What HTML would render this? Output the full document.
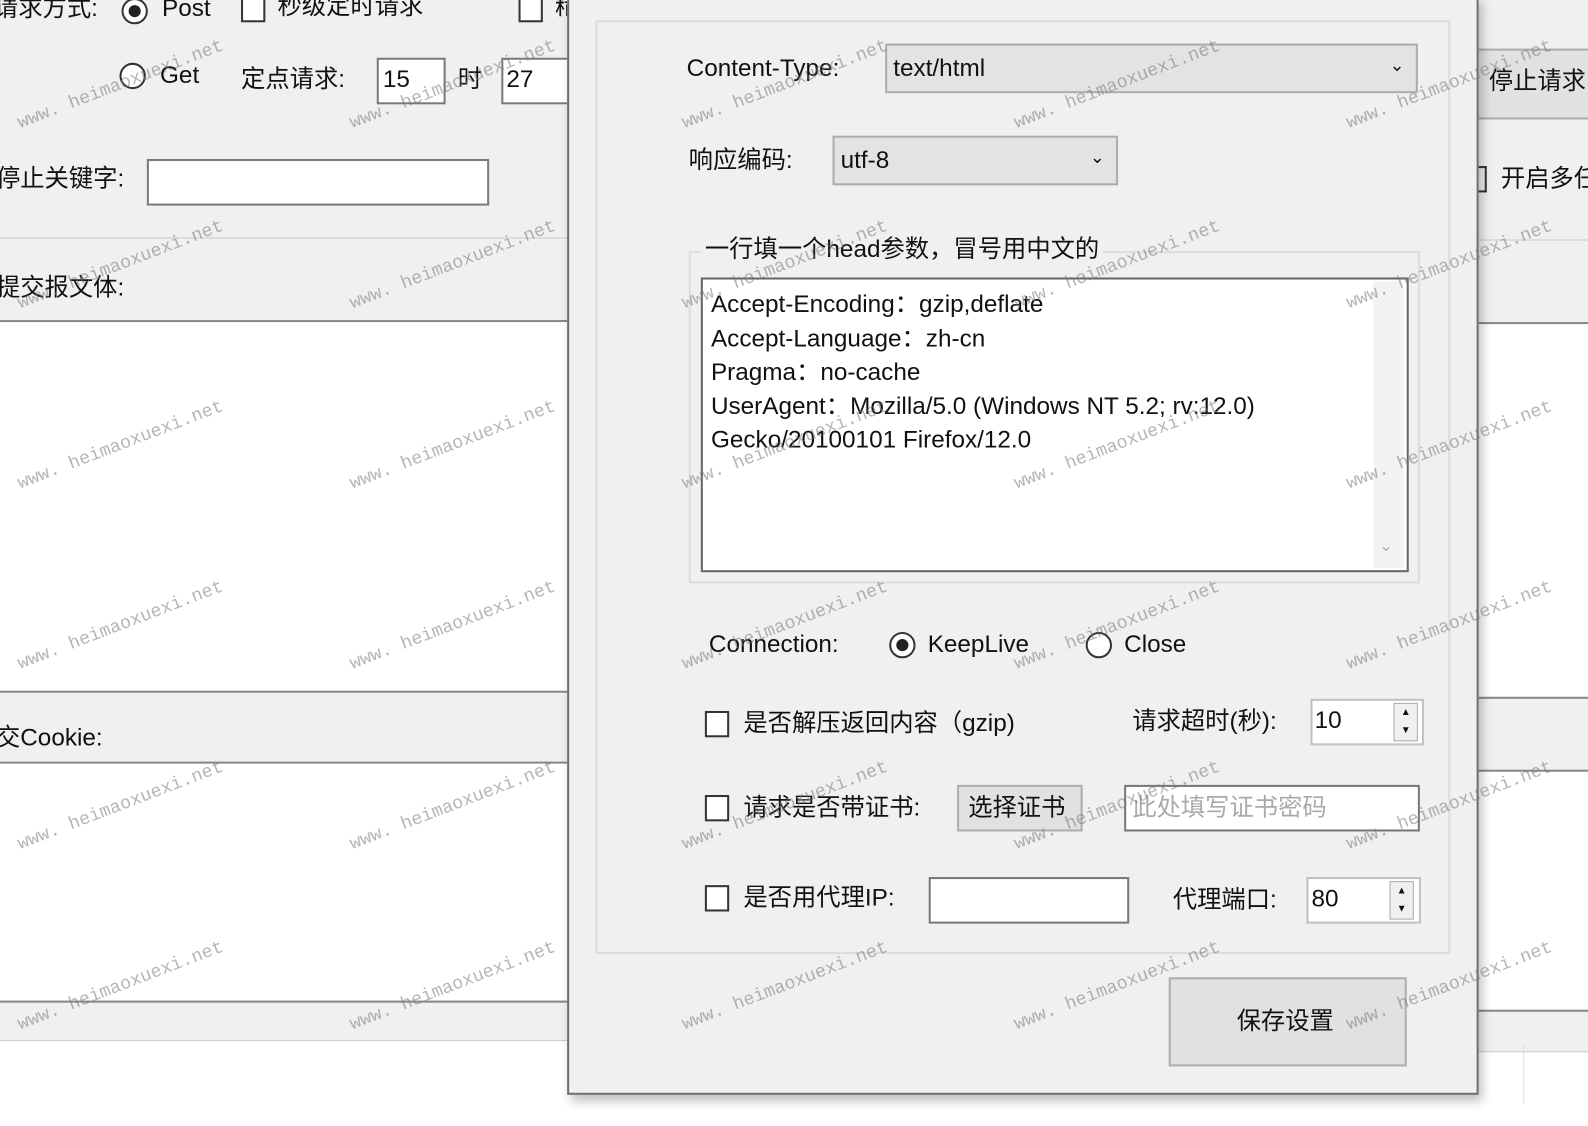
<!DOCTYPE html>
<html><head><meta charset="utf-8"><style>
*{margin:0;padding:0;box-sizing:border-box}
body{width:1588px;height:1126px;position:relative;overflow:hidden;background:#fff;font-family:"Liberation Sans","Noto Sans CJK SC",sans-serif;font-size:24px;color:#111}
#w{position:absolute;left:0;top:0;width:1568px;height:1112px;transform:scale(1.01276);transform-origin:0 0}
.a{position:absolute}
.t{position:absolute;white-space:nowrap;line-height:1}
.box{position:absolute;background:#fff;border:2px solid #7a7a7a}
.cb{position:absolute;width:24px;height:26px;border:2px solid #333;background:#fff}
.rad{position:absolute;width:26px;height:26px;border:2px solid #333;border-radius:50%;background:#fff}
.rad.on::after{content:"";position:absolute;left:5px;top:5px;width:12px;height:12px;border-radius:50%;background:#222}
.combo{position:absolute;background:#e3e3e3;border:2px solid #adadad}
.wm{position:absolute;font-family:"Liberation Mono",monospace;font-size:18px;color:rgba(120,120,120,.55);transform:rotate(-21deg);transform-origin:left bottom;white-space:nowrap;letter-spacing:0}
</style></head><body><div id="w">
<div class="a" style="left:0;top:0;width:562px;height:318px;background:#f0f0f0"></div>
<div class="a" style="left:0;top:234px;width:562px;height:2px;background:#ddd"></div>
<div class="a" style="left:0;top:316px;width:562px;height:2px;background:#888"></div>
<div class="a" style="left:0;top:682px;width:562px;height:72px;background:#f0f0f0;border-top:2px solid #888;border-bottom:2px solid #888"></div>
<div class="a" style="left:0;top:988px;width:562px;height:40px;background:#f0f0f0;border-top:2px solid #888;border-bottom:1px solid #ccc"></div>
<div class="a" style="left:1460px;top:0;width:128px;height:320px;background:#f0f0f0"></div>
<div class="a" style="left:1460px;top:48px;width:128px;height:70px;background:#e1e1e1;border-top:2px solid #adadad;border-bottom:2px solid #adadad"></div>
<div class="t" style="left:1470px;top:69px">停止请求</div>
<div class="a" style="left:1456px;top:164px;width:12px;height:26px;border:2px solid #333;border-left:none"></div>
<div class="t" style="left:1482px;top:165px">开启多任</div>
<div class="a" style="left:1460px;top:236px;width:128px;height:2px;background:#ddd"></div>
<div class="a" style="left:1460px;top:318px;width:128px;height:2px;background:#888"></div>
<div class="a" style="left:1460px;top:688px;width:128px;height:74px;background:#f0f0f0;border-top:2px solid #888;border-bottom:2px solid #888"></div>
<div class="a" style="left:1460px;top:997px;width:128px;height:42px;background:#f0f0f0;border-top:2px solid #888;border-bottom:1px solid #ccc"></div>
<div class="a" style="left:1504px;top:1030px;width:1px;height:60px;background:#ddd"></div>
<div class="t" style="left:-6px;top:-3px">请求方式:</div>
<div class="rad on" style="left:120px;top:-2px"></div>
<div class="t" style="left:160px;top:-3px">Post</div>
<div class="cb" style="left:238px;top:-4px"></div>
<div class="t" style="left:274px;top:-5px">秒级定时请求</div>
<div class="cb" style="left:512px;top:-4px"></div>
<div class="t" style="left:548px;top:-5px">精</div>
<div class="rad" style="left:118px;top:62px"></div>
<div class="t" style="left:158px;top:63px">Get</div>
<div class="t" style="left:238px;top:67px">定点请求:</div>
<div class="box" style="left:372px;top:57px;width:68px;height:46px"></div>
<div class="t" style="left:378px;top:67px">15</div>
<div class="t" style="left:452px;top:67px">时</div>
<div class="box" style="left:495px;top:57px;width:80px;height:46px"></div>
<div class="t" style="left:500px;top:67px">27</div>
<div class="t" style="left:-4px;top:165px">停止关键字:</div>
<div class="box" style="left:145px;top:157px;width:338px;height:46px"></div>
<div class="t" style="left:-4px;top:273px">提交报文体:</div>
<div class="t" style="left:-4px;top:717px">交Cookie:</div>
<div class="a" style="left:560px;top:-4px;width:900px;height:1085px;background:#f0f0f0;border:2px solid #6e6e6e;box-shadow:4px 6px 10px rgba(0,0,0,.25)"></div>
<div class="a" style="left:588px;top:20px;width:844px;height:922px;border:2px solid #dcdcdc"></div>
<div class="t" style="left:678px;top:56px">Content-Type:</div>
<div class="combo" style="left:874px;top:43px;width:526px;height:49px"></div>
<div class="t" style="left:882px;top:56px">text/html</div>
<div class="t" style="left:1372px;top:55px;font-size:18px">⌄</div>
<div class="t" style="left:680px;top:147px">响应编码:</div>
<div class="combo" style="left:822px;top:134px;width:282px;height:49px"></div>
<div class="t" style="left:830px;top:147px">utf-8</div>
<div class="t" style="left:1076px;top:146px;font-size:18px">⌄</div>
<div class="a" style="left:680px;top:248px;width:722px;height:328px;border:2px solid #dcdcdc"></div>
<div class="t" style="left:692px;top:235px;background:#f0f0f0;padding:0 4px">一行填一个head参数，冒号用中文的</div>
<div class="box" style="left:692px;top:274px;width:699px;height:291px;border-color:#666"></div>
<div class="a" style="left:1356px;top:278px;width:30px;height:283px;background:#f2f2f2"></div>
<div class="t" style="left:1362px;top:532px;font-size:16px;color:#aaa">⌄</div>
<div class="t" style="left:702px;top:284px;line-height:33.5px">Accept-Encoding：gzip,deflate<br>Accept-Language：zh-cn<br>Pragma：no-cache<br>UserAgent：Mozilla/5.0 (Windows NT 5.2; rv:12.0)<br>Gecko/20100101 Firefox/12.0</div>
<div class="t" style="left:700px;top:625px">Connection:</div>
<div class="rad on" style="left:878px;top:624px"></div>
<div class="t" style="left:916px;top:625px">KeepLive</div>
<div class="rad" style="left:1072px;top:624px"></div>
<div class="t" style="left:1110px;top:625px">Close</div>
<div class="cb" style="left:696px;top:702px"></div>
<div class="t" style="left:734px;top:703px">是否解压返回内容（gzip)</div>
<div class="t" style="left:1118px;top:701px">请求超时(秒):</div>
<div class="box" style="left:1294px;top:690px;width:112px;height:46px;border-color:#c0c0c0"></div>
<div class="t" style="left:1298px;top:700px">10</div>
<div class="a" style="left:1376px;top:694px;width:24px;height:38px;background:#f0f0f0;border:1px solid #aaa;font-size:10px;text-align:center;line-height:18px">▲<br>▼</div>
<div class="cb" style="left:696px;top:785px"></div>
<div class="t" style="left:734px;top:786px">请求是否带证书:</div>
<div class="a" style="left:945px;top:775px;width:124px;height:46px;background:#e1e1e1;border:2px solid #adadad"></div>
<div class="t" style="left:956px;top:786px">选择证书</div>
<div class="box" style="left:1110px;top:775px;width:292px;height:46px;border-color:#777"></div>
<div class="t" style="left:1118px;top:786px;color:#aaa">此处填写证书密码</div>
<div class="cb" style="left:696px;top:874px"></div>
<div class="t" style="left:734px;top:875px">是否用代理IP:</div>
<div class="box" style="left:917px;top:866px;width:198px;height:46px;border-color:#777"></div>
<div class="t" style="left:1158px;top:877px">代理端口:</div>
<div class="box" style="left:1290px;top:866px;width:113px;height:46px;border-color:#c0c0c0"></div>
<div class="t" style="left:1295px;top:876px">80</div>
<div class="a" style="left:1372px;top:870px;width:24px;height:38px;background:#f0f0f0;border:1px solid #aaa;font-size:10px;text-align:center;line-height:18px">▲<br>▼</div>
<div class="a" style="left:1154px;top:965px;width:235px;height:88px;background:#e1e1e1;border:2px solid #adadad"></div>
<div class="t" style="left:1221px;top:997px">保存设置</div>
<div class="wm" style="left:22px;top:112px">www. heimaoxuexi.net</div>
<div class="wm" style="left:350px;top:112px">www. heimaoxuexi.net</div>
<div class="wm" style="left:678px;top:112px">www. heimaoxuexi.net</div>
<div class="wm" style="left:1006px;top:112px">www. heimaoxuexi.net</div>
<div class="wm" style="left:1334px;top:112px">www. heimaoxuexi.net</div>
<div class="wm" style="left:22px;top:290px">www. heimaoxuexi.net</div>
<div class="wm" style="left:350px;top:290px">www. heimaoxuexi.net</div>
<div class="wm" style="left:678px;top:290px">www. heimaoxuexi.net</div>
<div class="wm" style="left:1006px;top:290px">www. heimaoxuexi.net</div>
<div class="wm" style="left:1334px;top:290px">www. heimaoxuexi.net</div>
<div class="wm" style="left:22px;top:468px">www. heimaoxuexi.net</div>
<div class="wm" style="left:350px;top:468px">www. heimaoxuexi.net</div>
<div class="wm" style="left:678px;top:468px">www. heimaoxuexi.net</div>
<div class="wm" style="left:1006px;top:468px">www. heimaoxuexi.net</div>
<div class="wm" style="left:1334px;top:468px">www. heimaoxuexi.net</div>
<div class="wm" style="left:22px;top:646px">www. heimaoxuexi.net</div>
<div class="wm" style="left:350px;top:646px">www. heimaoxuexi.net</div>
<div class="wm" style="left:678px;top:646px">www. heimaoxuexi.net</div>
<div class="wm" style="left:1006px;top:646px">www. heimaoxuexi.net</div>
<div class="wm" style="left:1334px;top:646px">www. heimaoxuexi.net</div>
<div class="wm" style="left:22px;top:824px">www. heimaoxuexi.net</div>
<div class="wm" style="left:350px;top:824px">www. heimaoxuexi.net</div>
<div class="wm" style="left:678px;top:824px">www. heimaoxuexi.net</div>
<div class="wm" style="left:1006px;top:824px">www. heimaoxuexi.net</div>
<div class="wm" style="left:1334px;top:824px">www. heimaoxuexi.net</div>
<div class="wm" style="left:22px;top:1002px">www. heimaoxuexi.net</div>
<div class="wm" style="left:350px;top:1002px">www. heimaoxuexi.net</div>
<div class="wm" style="left:678px;top:1002px">www. heimaoxuexi.net</div>
<div class="wm" style="left:1006px;top:1002px">www. heimaoxuexi.net</div>
<div class="wm" style="left:1334px;top:1002px">www. heimaoxuexi.net</div>
</div></body></html>
